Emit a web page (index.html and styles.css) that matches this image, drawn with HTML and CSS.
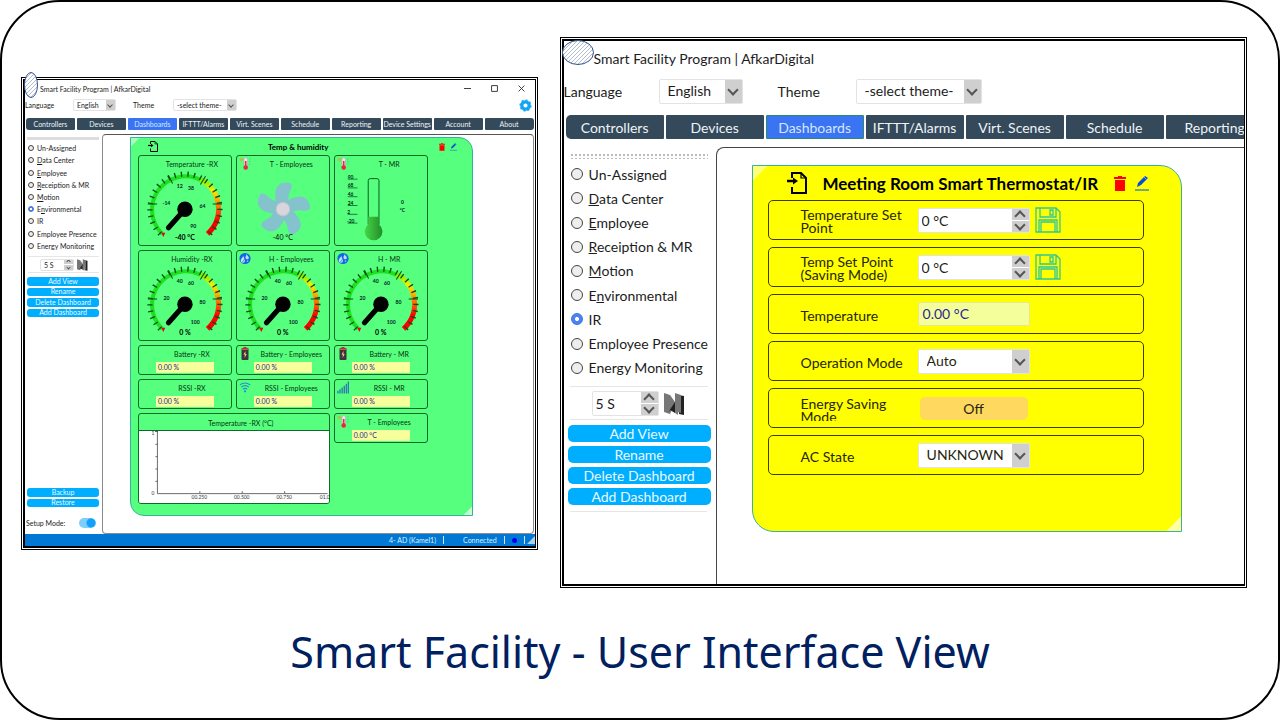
FILE: index.html
```html
<!DOCTYPE html>
<html lang="en">
<head>
<meta charset="utf-8">
<title>Smart Facility - User Interface View</title>
<link rel="stylesheet" href="styles.css">
</head>
<body>
<svg class="defs" aria-hidden="true">
  <defs>
    <pattern id="hatch" width="4" height="4" patternUnits="userSpaceOnUse"><path d="M-1 1l2-2M0 4l4-4M3 5l2-2" stroke="#7d8fae" stroke-width=".6"/></pattern>
    <linearGradient id="liquid"><stop offset="0" stop-color="#45d645"/><stop offset="1" stop-color="#238c28"/></linearGradient>
    <linearGradient id="heat" x1="0" y1="0" x2="0" y2="1"><stop offset="0" stop-color="#7fee00"/><stop offset=".2" stop-color="#f4f000"/><stop offset=".35" stop-color="#ffb400"/><stop offset=".6" stop-color="#ff4a00"/><stop offset=".75" stop-color="#f00"/></linearGradient>
  </defs>
  <symbol id="enter" viewBox="0 0 20 22"><path d="M5 6V1h9l5 5v15H5v-6" fill="none" stroke="#000" stroke-width="2"/><path d="M14 1v5h5" fill="none" stroke="#000" stroke-width="1.200"/><path d="M0 9h7" stroke="#000" stroke-width="2.500"/><path d="M6 5.500l5 3.500-5 3.500z"/></symbol>
  <symbol id="trash" viewBox="0 0 12 15"><path d="M0 1h4V0h4v1h4v2H0zM1 4h10v11H1z" fill="#f00"/></symbol>
  <symbol id="pencil" viewBox="0 0 14 15"><path d="M2 11l1-4 7-7 3 2-7 7z" fill="#0b49d8"/><path d="M9 1l3 3" stroke="#6aa0ff"/><path d="M0 14h14" stroke="#1a6fd0" stroke-width="1.200"/></symbol>
  <symbol id="disk" viewBox="0 0 26 26"><path d="M1 1h20l4 4v20H1zM5 1v9h16V1M15 3h3v5h-3zM4 25V13h18v12M6 25V15h14v10" fill="none" stroke="#2fc79a" stroke-width="1.300"/></symbol>
  <symbol id="skip" viewBox="0 0 21 22"><path d="M0 0l6 2 5 7V0l3 1v21l-3-2v-10l-5 11-6-2z" fill="#777"/><path d="M3 21l8-12v11l-5-3zM14 2l6 1v19l-5-1z" fill="#222"/><path d="M14 1l3 1v18l-3-1z" fill="#777"/></symbol>
  <symbol id="thermo" viewBox="0 0 12 13"><circle cx="2.500" cy="2.500" r="1.500" fill="none" stroke="#f79a1c" stroke-dasharray="1 .5"/><circle cx="2.500" cy="2.500" r=".8" fill="#f79a1c"/><rect x="5" y=".5" width="3.500" height="9" rx="1.700" fill="#e8e8f2" stroke="#b9a" stroke-width=".5"/><circle cx="6.700" cy="10.500" r="2.300" fill="#e8283c"/><path d="M6.700 4v6" stroke="#e8283c" stroke-width="1.600"/><path d="M10 2h1.500M10 4.500h1.500M10 7h1.500" stroke="#3bb7b0" stroke-width=".6"/></symbol>
  <symbol id="drop" viewBox="0 0 14 14"><circle cx="7" cy="7" r="6.500" fill="#1268e0"/><path d="M5 4c-2 3-3 4-3 5.500a2.500 2.500 0 0 0 5 0C7 8 6 7 5 4zM9 2C8 4 7.500 5 7.500 6a2 2 0 0 0 4 0C11.500 5 10 4 9 2z" fill="#bfe0ff"/><path d="M4 11l4-5" stroke="#1268e0" stroke-width=".8"/><circle cx="10" cy="10" r="1" fill="#8cc2ff"/></symbol>
  <symbol id="battery" viewBox="-2 0 12 13"><rect x="2.500" width="3" height="1.500" fill="#a33"/><rect x=".5" y="1" width="7" height="12" rx="1" fill="#3c3440"/><path d="M.5 3V1.500h7V3z" fill="#e2503c"/><path d="M4.500 4L2.500 7.500h1.400L3.500 11l2.200-4H4.400z" fill="#ffd27a"/></symbol>
  <symbol id="wifi" viewBox="0 0 14 13"><path d="M1 3.500q6-4.500 12 0M2.500 6q4.500-3.500 9 0M4.500 8.500q2.500-2 5 0" fill="none" stroke="#1e90d8" stroke-width="1.300"/><circle cx="7" cy="11" r="1.300" fill="#1e90d8"/></symbol>
  <symbol id="bars" viewBox="0 0 13 13"><path d="M1 13v-3M3.300 13V8.500M5.600 13V6.500M7.900 13V4.500M10.200 13V2.500M12.400 13V0" stroke="#2a7fb0" stroke-width="1.500"/></symbol>
  <symbol id="dial" viewBox="-40 -40 80 68">
    <path d="M-22 24A32.500 32.500 0 0 1 16-28" fill="none" stroke="#1fe01f" stroke-width="4"/>
    <path d="M15-29A32.500 32.500 0 0 1 22 24" fill="none" stroke="url(#heat)" stroke-width="5"/>
    <path d="M-24 24A34 34 0 1 1 24 24" fill="none" stroke="#064d16" stroke-width="5" pathLength="250" stroke-dasharray="2 7.920"/>
    <path d="M-36-5h9M-16-33l4 8M20-32l-5 8M36-5h-9" fill="none" stroke="#064d16"/>
    <path d="M0 0L-16 18" stroke="#000" stroke-width="5" stroke-linecap="round"/><circle r="7.500"/>
    <path d="M-23 23l4 0-2 4z" fill="#e02"/>
  </symbol>
</svg>

<main class="slide">
  <div class="stage">
    <section class="window window-small">
      <svg class="badge" viewBox="0 0 14 26" aria-hidden="true"><ellipse cx="7" cy="13" rx="6.500" ry="12.500" fill="#fff"/><ellipse cx="7" cy="13" rx="6.500" ry="12.500" fill="url(#hatch)" stroke="#31538f"/></svg>
      <div class="app">
        <header class="titlebar"><span>Smart Facility Program | AfkarDigital</span>
          <span class="window-buttons">
            <button aria-label="Minimize"><svg viewBox="0 0 6 6"><path d="M0 3h6"/></svg></button>
            <button aria-label="Maximize"><svg viewBox="0 0 6 6"><path d="M.5.5h5v5h-5z"/></svg></button>
            <button aria-label="Close"><svg viewBox="0 0 6 6"><path d="M.5.500l5 5M5.500.500l-5 5"/></svg></button>
          </span>
        </header>
        <div class="options">
          <label for="lang1">Language</label><span class="select lang"><select id="lang1"><option>English</option></select></span>
          <label for="theme1">Theme</label><span class="select theme"><select id="theme1"><option>-select theme-</option></select></span>
          <button class="gear" aria-label="Settings"><svg viewBox="-7 -7 14 14"><circle r="4" fill="none" stroke="#12a5f4" stroke-width="3.500"/><circle r="5.800" fill="none" stroke="#12a5f4" stroke-width="1.500" pathLength="16" stroke-dasharray="1"/></svg></button>
        </div>
        <nav class="tabs"><button>Controllers</button><button>Devices</button><button class="active">Dashboards</button><button>IFTTT/Alarms</button><button>Virt. Scenes</button><button>Schedule</button><button>Reporting</button><button>Device Settings</button><button>Account</button><button>About</button></nav>
        <div class="body">
          <aside class="sidebar">
            <div class="grip"></div>
            <div class="views">
              <label><input type="radio" name="v1">Un-Assigned</label>
              <label><input type="radio" name="v1"><span><u>D</u>ata Center</span></label>
              <label><input type="radio" name="v1"><span><u>E</u>mployee</span></label>
              <label><input type="radio" name="v1"><span><u>R</u>eceiption &amp; MR</span></label>
              <label><input type="radio" name="v1"><span><u>M</u>otion</span></label>
              <label><input type="radio" name="v1" checked><span>E<u>n</u>vironmental</span></label>
              <label><input type="radio" name="v1"><span>IR</span></label>
              <label><input type="radio" name="v1">Employee Presence</label>
              <label><input type="radio" name="v1">Energy Monitoring</label>
            </div>
            <div class="timer"><span class="spin"><input type="text" value="5 S" aria-label="Interval"><span class="steps"><button aria-label="Up"></button><button aria-label="Down"></button></span></span><button class="skip" aria-label="Next"><svg><use href="#skip"/></svg></button></div>
            <div class="actions four"><button>Add View</button><button>Rename</button><button>Delete Dashboard</button><button>Add Dashboard</button></div>
            <div class="actions bottom"><button>Backup</button><button>Restore</button></div>
            <label class="setup">Setup Mode: <input type="checkbox" role="switch" checked></label>
          </aside>
          <div class="main">
            <article class="board green">
              <header class="board-head"><svg class="enter"><use href="#enter"/></svg><h2>Temp &amp; humidity</h2><button aria-label="Delete"><svg class="trash"><use href="#trash"/></svg></button><button aria-label="Edit"><svg class="pencil"><use href="#pencil"/></svg></button></header>
              <div class="widgets">
                <section class="card"><h3>Temperature -RX</h3>
                  <svg class="dial" viewBox="-40 -40 80 68"><use href="#dial" x="-40" y="-40" width="80" height="68"/><g class="scale"><text x="-18" y="-4">-14</text><text x="-5" y="-21">12</text><text x="6" y="-19">38</text><text x="17" y="-1">64</text><text x="8" y="18">90</text></g></svg><output>-40 °C</output></section>
                <section class="card"><svg class="icon"><use href="#thermo"/></svg><h3 class="beside">T - Employees</h3>
                  <svg class="fan" viewBox="-40 -40 80 68"><g fill="#84c3cc"><path id="blade" d="M-6-4C-9-15-8-26 3-26c9 0 5 6 3 11-1 4-1 6 0 11z"/><use href="#blade" transform="rotate(72)"/><use href="#blade" transform="rotate(144)"/><use href="#blade" transform="rotate(216)"/><use href="#blade" transform="rotate(288)"/></g><circle r="6.500" fill="#d8d5dc" stroke="#c4c4d0"/></svg><output class="plain">-40 °C</output></section>
                <section class="card"><svg class="icon"><use href="#thermo"/></svg><h3 class="beside">T - MR</h3>
                  <svg class="tube" viewBox="0 0 94 74"><g class="scale"><text x="16" y="9">90</text><text x="16" y="18">68</text><text x="16" y="27">46</text><text x="16" y="36">24</text><text x="14" y="45">2</text><text x="16" y="54">-20</text><text x="69" y="35">0</text><text x="69" y="43">°C</text></g><path d="M13 9.500h10M13 18.500h10M13 27.500h10M13 36.500h10M13 45.500h10M13 54.500h10" stroke="#075a20" stroke-width=".8"/><path d="M34 56V11q0-2 2-2h7q2 0 2 2v45" fill="none" stroke="#075a20"/><path d="M34 48h11v8a9 9 0 1 1-11 0z" fill="url(#liquid)"/></svg></section>
                <section class="card"><h3>Humidity -RX</h3>
                  <svg class="dial" viewBox="-40 -40 80 68"><use href="#dial" x="-40" y="-40" width="80" height="68"/><g class="scale"><text x="-18" y="-4">20</text><text x="-5" y="-21">40</text><text x="6" y="-19">60</text><text x="17" y="0">80</text><text x="10" y="19">100</text></g></svg><output>0 %</output></section>
                <section class="card"><svg class="icon"><use href="#drop"/></svg><h3 class="beside">H - Employees</h3>
                  <svg class="dial" viewBox="-40 -40 80 68"><use href="#dial" x="-40" y="-40" width="80" height="68"/><g class="scale"><text x="-18" y="-4">20</text><text x="-5" y="-21">40</text><text x="6" y="-19">60</text><text x="17" y="0">80</text><text x="10" y="19">100</text></g></svg><output>0 %</output></section>
                <section class="card"><svg class="icon"><use href="#drop"/></svg><h3 class="beside">H - MR</h3>
                  <svg class="dial" viewBox="-40 -40 80 68"><use href="#dial" x="-40" y="-40" width="80" height="68"/><g class="scale"><text x="-18" y="-4">20</text><text x="-5" y="-21">40</text><text x="6" y="-19">60</text><text x="17" y="0">80</text><text x="10" y="19">100</text></g></svg><output>0 %</output></section>
                <section class="card"><h3>Battery -RX</h3><output class="value">0.00 %</output></section>
                <section class="card"><svg class="icon"><use href="#battery"/></svg><h3 class="beside">Battery - Employees</h3><output class="value">0.00 %</output></section>
                <section class="card"><svg class="icon"><use href="#battery"/></svg><h3 class="beside">Battery - MR</h3><output class="value">0.00 %</output></section>
                <section class="card"><h3>RSSI -RX</h3><output class="value">0.00 %</output></section>
                <section class="card"><svg class="icon"><use href="#wifi"/></svg><h3 class="beside">RSSI - Employees</h3><output class="value">0.00 %</output></section>
                <section class="card"><svg class="icon"><use href="#bars"/></svg><h3 class="beside">RSSI - MR</h3><output class="value">0.00 %</output></section>
                <section class="card chart"><h3>Temperature -RX (°C)</h3>
                  <svg viewBox="0 0 190 73"><path d="M17.500 0v63.500H190M15 .5h3M15.500 13.500h2M15.500 26h2M15.500 38.500h2M15.500 51h2M60.500 61v2M103.500 61v2M146.500 61v2" fill="none" stroke="#444" stroke-width=".8"/><g class="axis"><text x="13" y="4">1</text><text x="13" y="65">0</text><text x="60" y="69">00.250</text><text x="103" y="69">00.500</text><text x="146" y="69">00.750</text><text x="190" y="69">01.000</text></g></svg></section>
                <section class="card"><svg class="icon"><use href="#thermo"/></svg><h3 class="beside">T - Employees</h3><output class="value">0.00 °C</output></section>
              </div>
            </article>
          </div>
        </div>
        <footer class="status"><span class="site">4- AD (Kamel1)</span><i></i><span class="link">Connected</span><i></i><b></b><i></i><svg viewBox="0 0 8 8"><path d="M8 0v8H0z" fill="#a9d3ef"/></svg></footer>
      </div>
    </section>

    <section class="window window-large">
      <svg class="badge" viewBox="0 0 32 25" aria-hidden="true"><ellipse cx="16" cy="12.500" rx="15.500" ry="12" fill="#fff"/><ellipse cx="16" cy="12.500" rx="15.500" ry="12" fill="url(#hatch)" stroke="#31538f"/></svg>
      <div class="app">
        <header class="titlebar"><span>Smart Facility Program | AfkarDigital</span></header>
        <div class="options">
          <label for="lang2">Language</label><span class="select lang"><select id="lang2"><option>English</option></select></span>
          <label for="theme2">Theme</label><span class="select theme"><select id="theme2"><option>-select theme-</option></select></span>
        </div>
        <nav class="tabs"><button>Controllers</button><button>Devices</button><button class="active">Dashboards</button><button>IFTTT/Alarms</button><button>Virt. Scenes</button><button>Schedule</button><button>Reporting</button></nav>
        <div class="body">
          <aside class="sidebar">
            <div class="grip"></div>
            <div class="views">
              <label><input type="radio" name="v2">Un-Assigned</label>
              <label><input type="radio" name="v2"><span><u>D</u>ata Center</span></label>
              <label><input type="radio" name="v2"><span><u>E</u>mployee</span></label>
              <label><input type="radio" name="v2"><span><u>R</u>eceiption &amp; MR</span></label>
              <label><input type="radio" name="v2"><span><u>M</u>otion</span></label>
              <label><input type="radio" name="v2"><span>E<u>n</u>vironmental</span></label>
              <label><input type="radio" name="v2" checked><span>IR</span></label>
              <label><input type="radio" name="v2">Employee Presence</label>
              <label><input type="radio" name="v2">Energy Monitoring</label>
            </div>
            <div class="timer"><span class="spin"><input type="text" value="5 S" aria-label="Interval"><span class="steps"><button aria-label="Up"></button><button aria-label="Down"></button></span></span><button class="skip" aria-label="Next"><svg><use href="#skip"/></svg></button></div>
            <div class="actions"><button>Add View</button><button>Rename</button><button>Delete Dashboard</button><button>Add Dashboard</button></div>
          </aside>
          <div class="main">
            <article class="board yellow">
              <header class="board-head"><svg class="enter"><use href="#enter"/></svg><h2>Meeting Room Smart Thermostat/IR</h2><button aria-label="Delete"><svg class="trash"><use href="#trash"/></svg></button><button aria-label="Edit"><svg class="pencil"><use href="#pencil"/></svg></button></header>
              <div class="rows">
                <div class="row"><label for="sp">Temperature Set Point</label><span class="spin"><input id="sp" type="text" value="0 °C"><span class="steps"><button aria-label="Up"></button><button aria-label="Down"></button></span></span><button class="save" aria-label="Save"><svg><use href="#disk"/></svg></button></div>
                <div class="row"><label for="ssp">Temp Set Point (Saving Mode)</label><span class="spin"><input id="ssp" type="text" value="0 °C"><span class="steps"><button aria-label="Up"></button><button aria-label="Down"></button></span></span><button class="save" aria-label="Save"><svg><use href="#disk"/></svg></button></div>
                <div class="row"><label for="temp">Temperature</label><output id="temp" class="reading">0.00 °C</output></div>
                <div class="row"><label for="mode">Operation Mode</label><span class="select"><select id="mode"><option>Auto</option></select></span></div>
                <div class="row"><label for="esm" class="clip">Energy Saving Mode</label><button id="esm" class="toggle">Off</button></div>
                <div class="row"><label for="ac">AC State</label><span class="select"><select id="ac"><option>UNKNOWN</option></select></span></div>
              </div>
            </article>
          </div>
        </div>
      </div>
    </section>
  </div>
  <h1 class="caption">Smart Facility - User Interface View</h1>
</main>
</body>
</html>
```
FILE: styles.css
```css
* { box-sizing: border-box; }
body { margin: 0; background: #fff; color: #1c1c1c; font-family: Lato, "Noto Sans", sans-serif; }
button, input, select { margin: 0; padding: 0; border: 0; background: none; color: inherit; font: inherit; }
h1, h2, h3 { margin: 0; font-weight: 400; }
svg { display: block; }
.defs { position: absolute; width: 0; height: 0; }

.slide { display: flex; flex-direction: column; min-height: 100vh; padding: 35px 0 38px; border: 2px solid #000; border-radius: 60px; }
.stage { display: flex; align-items: flex-start; gap: 22px; padding: 0 31px 0 19px; }
.caption { margin: auto 0 0; text-align: center; color: #002060; font: 43px/56px "Noto Sans", sans-serif; }

.window { position: relative; min-width: 0; border: 1px solid #000; padding: 1px; }
.window-small { flex: 516; margin-top: 40px; }
.window-large { flex: 688; }
.badge { position: absolute; }
.window-small .badge { left: 2px; top: -6px; width: 14px; height: 26px; }
.window-large .badge { left: 1px; top: 2px; width: 32px; height: 25px; }
.app { display: flex; flex-direction: column; border: 2px solid #000; border-right-width: 1px; overflow: hidden; background: #fff; font-size: var(--text); }

.window-small { --text: 7px; --side: 77px; --pick: 6px; --ctl: 12px; --arrow: 9px; --tip: 2px; --btn: 8px; --btn-gap: 2px; --head: 8px; }
.window-large { --text: 14px; --side: 152px; --pick: 12px; --ctl: 25px; --arrow: 17px; --tip: 4px; --btn: 17px; --btn-gap: 4px; --head: 17px; }
.window-small .app { min-height: 469px; border-top-width: 1px; }
.window-large .app { min-height: 545px; }

.titlebar { display: flex; justify-content: space-between; align-items: center; }
.window-small .titlebar { height: 17px; padding: 0 10px 0 15px; }
.window-large .titlebar { height: 34px; padding-left: 30px; font-size: 14px; }
.window-buttons { display: flex; gap: 20px; }
.window-buttons svg { width: 7px; height: 7px; fill: none; stroke: #333; stroke-width: .8; }

.options { display: flex; align-items: center; }
.window-small .options { height: 16px; }
.window-large .options { height: 32px; }
.window-small .options label { width: 48px; }
.window-large .options label { width: 95px; }
.options .lang { flex: none; }
.window-small .lang { width: 43px; margin-right: 17px; }
.window-large .lang { width: 84px; margin-right: 35px; }
.window-small .options .lang + label { width: 40px; }
.window-large .options .lang + label { width: 78px; }
.window-small .theme { width: 64px; }
.window-large .theme { width: 126px; }
.gear { margin-left: auto; margin-right: 3px; }
.gear svg { width: 13px; height: 13px; }

.select { position: relative; display: block; height: var(--ctl); border: 1px solid #e3e3e3; border-radius: 2px; background: linear-gradient(#cfcfcf, #cfcfcf) right / var(--arrow) 100% no-repeat #fff; }
.select select { display: block; width: 100%; height: 100%; appearance: none; line-height: 1; }
.window-small .select select { padding-left: 3px; }
.window-large .select select { padding-left: 8px; }
.select::after, .steps button::before { content: ""; width: var(--tip); height: var(--tip); border: solid #555; border-width: 0 1px 1px 0; transform: rotate(45deg); }
.select::after { position: absolute; right: 3px; top: 3px; width: 3px; height: 3px; pointer-events: none; }
.window-large .select::after { width: 6px; height: 6px; right: 5px; top: 6px; border-width: 0 2px 2px 0; }
.spin { display: flex; height: var(--ctl); border: 1px solid #e3e3e3; border-radius: 2px; background: #fff; }
.spin input { flex: 1; min-width: 0; padding-left: 3px; }
.steps { display: grid; grid-template-rows: 1fr 1fr; gap: 1px; width: var(--arrow); }
.steps button { display: grid; place-items: center; min-height: 0; background: #cfcfcf; overflow: hidden; }
.steps button:first-child::before { transform: rotate(225deg); }
.window-large .steps button::before { width: 6px; height: 6px; border-width: 0 2px 2px 0; }
.window-large .steps button:first-child { padding-top: 3px; }
.window-large .steps button:last-child { padding-bottom: 3px; }

.tabs { display: flex; overflow: hidden; border-radius: 3px; color: #eef3f7; }
.window-small .tabs { gap: 2px; height: 12px; margin: 5px 1px 0 1px; }
.window-large .tabs { gap: 2px; height: 24px; margin: 8px 0 0 2px; }
.tabs button { background: #34495a; white-space: nowrap; border-radius: 1px; }
.window-small .tabs button { flex: 1 1 0; min-width: 0; }
.window-large .tabs button { flex: 0 0 98px; }
.window-large .tabs { border-radius: 5px 0 0 5px; }
.tabs .active { background: #3a74f2; color: #d5e6ff; border: 1px solid #2a8a6a; }
.window-small .tabs .active { border: 0; }

.body { flex: 1; display: grid; grid-template-columns: var(--side) minmax(0, 1fr); }
.window-small .body { margin: 4px 1px 0 0; }
.window-large .body { margin-top: 8px; }
.sidebar { display: flex; flex-direction: column; }
.main { border: 1px solid #8b8b8b; border-top-color: #555; }
.window-small .main { padding: 2px 60px 17px 27px; border-radius: 4px; }
.window-large .main { padding: 17px 62px 52px 35px; border-color: #444; border-width: 1px 0 0 1px; border-radius: 8px 0 0 0; }

.grip { background: radial-gradient(circle, #aaa 1px, transparent 1px) 0 0 / 4px 4px; }
.window-small .grip { height: 3px; margin: 3px 3px 2px 2px; background-size: 2px 2px; opacity: .4; }
.window-large .grip { height: 6px; margin: 6px 8px 3px 6px; opacity: .8; }
.views { display: grid; grid-auto-rows: 1fr; }
.window-small .views { height: 110px; margin: 0 0 4px 3px; }
.window-large .views { height: 218px; margin: 0 0 6px 7px; }
.views label { display: flex; align-items: center; white-space: nowrap; }
.window-small .views label { gap: 3px; }
.window-large .views label { gap: 6px; }
.views input { flex: none; appearance: none; width: var(--pick); height: var(--pick); border: 1px solid #444; border-radius: 50%; background: #eee; }
.views input:checked { border-color: #3c72e8; background: radial-gradient(circle, #fff 25%, #4b82f3 32%); }
.views u { text-underline-offset: 1px; text-decoration-thickness: 1px; }
.timer { display: flex; align-items: center; border: solid #e6e6e6; border-width: 1px 0; }
.window-small .timer { height: 17px; margin: 0 3px; padding-left: 12px; }
.window-large .timer { height: 34px; margin: 0 8px 5px 6px; padding-left: 22px; }
.window-small .spin { width: 34px; }
.window-large .spin { width: 67px; }
.window-small .skip svg { width: 11px; height: 12px; margin-left: 3px; }
.window-large .skip svg { width: 21px; height: 22px; margin: 2px 0 0 5px; }
.actions { display: grid; gap: var(--btn-gap); color: #eaf8ff; }
.window-small .actions { margin: 4px 3px 0 2px; }
.window-large .actions { margin: 0 5px 0 4px; padding-bottom: 6px; }
.window-large .actions::after { content: ""; height: 1px; margin: 2px 4px 0 2px; background: #e6e6e6; }
.actions button { display: grid; place-items: center; min-height: var(--btn); border-radius: 5px; background: #00aeff; line-height: 1; }
.window-small .actions button { border-radius: 3px; }
.window-small .four { height: 40px; }
.window-small .bottom { height: 19px; margin-top: auto; }
.setup { display: flex; align-items: center; height: 27px; padding: 5px 6px 0 1px; justify-content: space-between; }
.setup input { appearance: none; width: 17px; height: 10px; border-radius: 5px; background: radial-gradient(circle at 12px 5px, #12a0f8 4px, #7fcdfb 5px); }

.board { position: relative; border: 1px solid #35b3a0; }
.board::before, .board::after { content: ""; position: absolute; width: 14px; height: 14px; opacity: .8; }
.board::before { left: 0; top: 0; background: linear-gradient(135deg, #fff9 50%, transparent 51%); }
.board::after { right: 0; bottom: 0; background: linear-gradient(315deg, #fffc 50%, transparent 51%); }
.window-small .board::before, .window-small .board::after { width: 8px; height: 8px; }
.green { height: 379px; padding: 0 44px 0 7px; border-radius: 0 14px 0 14px; background: #57ff7f; }
.yellow { height: 367px; padding: 0 37px 0 15px; border-radius: 0 22px 0 22px; background: #ff0; }
.board-head { display: flex; align-items: center; color: #000; }
.board-head h2 { flex: 1; text-align: center; font-size: var(--head); font-weight: 700; white-space: nowrap; }
.green .board-head { height: 17px; padding-left: 10px; margin-right: -29px; }
.yellow .board-head { height: 34px; padding-left: 19px; margin-right: -5px; }
.enter { width: 20px; height: 22px; }
.trash { width: 12px; height: 15px; }
.pencil { width: 14px; height: 15px; margin-left: 9px; }
.green .enter { width: 10px; height: 11px; }
.green .trash { width: 6px; height: 8px; }
.green .pencil { width: 7px; height: 8px; margin-left: 5px; }

.widgets { display: grid; grid-template-columns: repeat(3, minmax(0, 1fr)); grid-template-rows: 91px 91px; grid-auto-rows: 30px; gap: 4px; }
.card { position: relative; display: flex; flex-direction: column; min-height: 0; border: 1px solid #0c6a2a; border-radius: 3px; color: #06340f; overflow: hidden; }
.card h3 { flex: none; height: 13px; padding: 4px 0 0 14px; text-align: center; font-size: 7px; line-height: 9px; white-space: nowrap; }
.card .beside { padding-left: 17px; }
.icon { position: absolute; left: 2px; top: 1px; width: 12px; height: 13px; }
.card output { margin-top: -5px; text-align: center; color: #000; font-size: 7px; font-weight: 700; line-height: 8px; }
.card output.plain { font-weight: 400; }
.card .value { width: 58px; height: 11px; margin: 3px 0 0 17px; padding-left: 2px; background: #f7ff9c; color: #1d2a94; text-align: left; font-weight: 400; line-height: 11px; }
.dial, .fan { flex: none; width: 100%; height: 70px; margin-top: -1px; overflow: visible; }
.tube { flex: none; width: 100%; height: 74px; }
.scale text { font-size: 5px; font-weight: 700; text-anchor: middle; fill: #022; }
.chart { grid-column: span 2; height: 91px; }
.chart h3 { height: 16px; padding-top: 5px; }
.chart svg { width: 100%; flex: 1; min-height: 0; border-top: 1px solid #0c6a2a; background: #fff; }
.axis text { font-size: 5px; text-anchor: middle; fill: #333; }

.status { display: flex; align-items: center; justify-content: flex-end; gap: 7px; height: 12px; background: #0078d4; color: #dff0ff; }
.status i { width: 1px; height: 8px; background: #cfe6f8; }
.status b { width: 5px; height: 5px; border-radius: 50%; background: #0000f0; }
.status .link { padding-left: 12px; }
.status svg { width: 8px; height: 8px; margin-left: -5px; }

.rows { display: grid; grid-auto-rows: 40px; gap: 7px; }
.row { display: grid; grid-template-columns: 117px 112px 1fr; align-items: center; padding-left: 32px; border: 1px solid #3d3d00; border-radius: 5px; color: #26260c; }
.row label { padding: 2px 10px 0 0; line-height: 13px; }
.row .clip { max-height: 26px; overflow: hidden; }
.row .spin { width: auto; color: #222; }
.row .save { justify-self: start; margin-left: 5px; }
.row .save svg { width: 26px; height: 26px; }
.reading { height: 24px; padding-left: 4px; border: 1px solid #e8e88a; border-radius: 2px; background: #f4ff9b; color: #2a1f9a; line-height: 22px; }
.toggle { height: 23px; margin: 0 2px; border-radius: 5px; background: #ffd860; }
```
